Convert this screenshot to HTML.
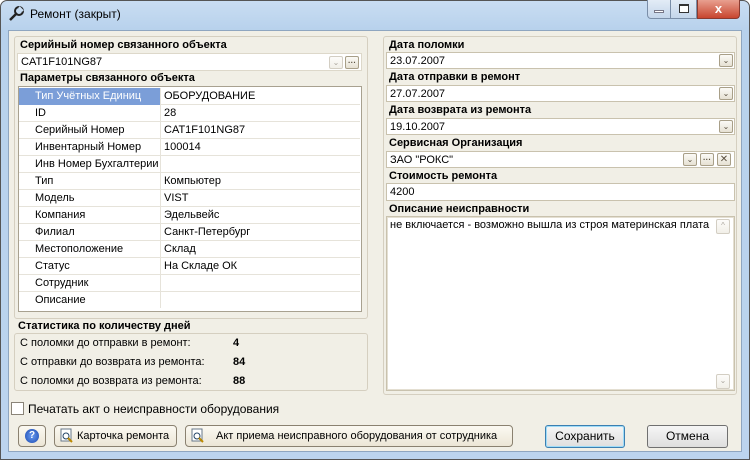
<!DOCTYPE html>
<html><head><meta charset="utf-8"><style>
*{box-sizing:border-box;margin:0;padding:0}
body{width:750px;height:460px;overflow:hidden;font-family:"Liberation Sans",sans-serif;font-size:11px;color:#000;background:#fff;position:relative}
.a{position:absolute}
.win{left:0;top:0;width:750px;height:460px;background:linear-gradient(#c9ddf2,#b7d1ec 30px,#bcd4ee);border:1px solid #555;border-radius:7px 7px 0 0}
.client{left:8px;top:30px;width:734px;height:422px;background:#f1efe6;border:1px solid #8fa6c0}
.panel{border:1px solid #d5cfc0;border-radius:3px;background:#f1efe6}
.lbl{font-weight:bold;font-size:11px;white-space:nowrap}
.inp{background:#fff;border:1px solid #c9c2ae;height:17px;padding:1px 3px;line-height:14px;white-space:nowrap}
.btn{width:14px;height:13px;border:1px solid #a89f88;border-radius:2px;background:linear-gradient(#fbfaf6,#e6e1d3);font-size:8px;text-align:center;line-height:11px;color:#5a5040}
.row{left:0;height:17px;width:341px;border-bottom:1px solid #e6e3da;line-height:16px}
.row .k{position:absolute;left:0;width:142px;height:16px;padding-left:16px;border-right:1px solid #e6e3da}
.row .v{position:absolute;left:143px;padding-left:2px}
.pb{height:22px;border:1px solid #8a8170;border-radius:4px;background:linear-gradient(#fbf9f2,#ece6d6);line-height:20px;font-size:11px;white-space:nowrap}
.db{height:23px;border:1px solid #707070;border-radius:3px;background:linear-gradient(#f6f6f6,#dedede);line-height:21px;text-align:center;font-size:12px}
</style></head><body>
<div class="a win"></div>
<svg class="a" style="left:7px;top:5px" width="18" height="18" viewBox="0 0 18 18"><path d="M3 15 L10 8" stroke="#222" stroke-width="2.5" fill="none"/><circle cx="12" cy="6" r="4" fill="none" stroke="#222" stroke-width="2"/><path d="M12 2 L16 6" stroke="#c9ddf2" stroke-width="2"/></svg>
<div class="a" style="left:30px;top:7px;font-size:12px">Ремонт (закрыт)</div>
<div class="a" style="left:647px;top:0;width:24px;height:19px;border:1px solid #7a8ea8;border-top:none;border-radius:0 0 0 4px;background:linear-gradient(#e3ecf6,#c3d5ea)"><div class="a" style="left:6px;top:10px;width:10px;height:3px;background:#fff;border:1px solid #778"></div></div>
<div class="a" style="left:670px;top:0;width:27px;height:19px;border:1px solid #7a8ea8;border-top:none;background:linear-gradient(#e3ecf6,#c3d5ea)"><div class="a" style="left:8px;top:4px;width:10px;height:9px;border:1px solid #333;border-top-width:2px;background:#fff"></div></div>
<div class="a" style="left:697px;top:0;width:43px;height:19px;border:1px solid #8a3a30;border-top:none;border-radius:0 0 4px 0;background:linear-gradient(#e8a090,#c8452f);color:#fff;font-weight:bold;text-align:center;line-height:17px;font-size:13px">x</div>
<div class="a client"></div>

<!-- left panel -->
<div class="a panel" style="left:14px;top:36px;width:354px;height:283px"></div>
<div class="a lbl" style="left:20px;top:39px">Серийный номер связанного объекта</div>
<div class="a inp" style="left:17px;top:53px;width:345px;height:18px;border-color:#ddd8ca">CAT1F101NG87</div>
<div class="a btn" style="left:329px;top:56px;opacity:.5">&#8964;</div>
<div class="a btn" style="left:345px;top:56px;font-weight:bold">···</div>
<div class="a lbl" style="left:20px;top:72px">Параметры связанного объекта</div>
<div class="a" style="left:18px;top:86px;width:344px;height:226px;border:1px solid #a8a190;background:#fff"></div>
<div class="a" style="left:19px;top:88px;width:342px;height:222px;background:#fff">
<div class="a row" style="top:0"><div class="k" style="background:#7b9ed8;color:#fff;height:17px">Тип Учётных Единиц</div><div class="v">ОБОРУДОВАНИЕ</div></div>
<div class="a row" style="top:17px"><div class="k">ID</div><div class="v">28</div></div>
<div class="a row" style="top:34px"><div class="k">Серийный Номер</div><div class="v">CAT1F101NG87</div></div>
<div class="a row" style="top:51px"><div class="k">Инвентарный Номер</div><div class="v">100014</div></div>
<div class="a row" style="top:68px"><div class="k">Инв Номер Бухгалтерии</div><div class="v"></div></div>
<div class="a row" style="top:85px"><div class="k">Тип</div><div class="v">Компьютер</div></div>
<div class="a row" style="top:102px"><div class="k">Модель</div><div class="v">VIST</div></div>
<div class="a row" style="top:119px"><div class="k">Компания</div><div class="v">Эдельвейс</div></div>
<div class="a row" style="top:136px"><div class="k">Филиал</div><div class="v">Санкт-Петербург</div></div>
<div class="a row" style="top:153px"><div class="k">Местоположение</div><div class="v">Склад</div></div>
<div class="a row" style="top:170px"><div class="k">Статус</div><div class="v">На Складе ОК</div></div>
<div class="a row" style="top:187px"><div class="k">Сотрудник</div><div class="v"></div></div>
<div class="a row" style="top:204px;border:none"><div class="k">Описание</div><div class="v"></div></div>
</div>
<div class="a lbl" style="left:18px;top:320px">Статистика по количеству дней</div>
<div class="a panel" style="left:14px;top:333px;width:354px;height:58px"></div>
<div class="a" style="left:20px;top:337px">С поломки до отправки в ремонт:</div>
<div class="a lbl" style="left:233px;top:337px">4</div>
<div class="a" style="left:20px;top:356px">С отправки до возврата из ремонта:</div>
<div class="a lbl" style="left:233px;top:356px">84</div>
<div class="a" style="left:20px;top:375px">С поломки до возврата из ремонта:</div>
<div class="a lbl" style="left:233px;top:375px">88</div>

<!-- right panel -->
<div class="a panel" style="left:383px;top:36px;width:354px;height:359px"></div>
<div class="a lbl" style="left:389px;top:39px">Дата поломки</div>
<div class="a inp" style="left:386px;top:52px;width:349px">23.07.2007</div>
<div class="a btn" style="left:719px;top:54px">&#8964;</div>
<div class="a lbl" style="left:389px;top:71px">Дата отправки в ремонт</div>
<div class="a inp" style="left:386px;top:85px;width:349px">27.07.2007</div>
<div class="a btn" style="left:719px;top:87px">&#8964;</div>
<div class="a lbl" style="left:389px;top:104px">Дата возврата из ремонта</div>
<div class="a inp" style="left:386px;top:118px;width:349px">19.10.2007</div>
<div class="a btn" style="left:719px;top:120px">&#8964;</div>
<div class="a lbl" style="left:389px;top:137px">Сервисная Организация</div>
<div class="a inp" style="left:386px;top:151px;width:349px">ЗАО "РОКС"</div>
<div class="a btn" style="left:683px;top:153px">&#8964;</div>
<div class="a btn" style="left:700px;top:153px;font-weight:bold">···</div>
<div class="a btn" style="left:717px;top:153px;font-size:10px">✕</div>
<div class="a lbl" style="left:389px;top:170px">Стоимость ремонта</div>
<div class="a inp" style="left:386px;top:183px;width:349px;height:18px">4200</div>
<div class="a lbl" style="left:389px;top:203px">Описание неисправности</div>
<div class="a" style="left:386px;top:216px;width:349px;height:175px;background:#fff;border:1px solid #c9c2ae;box-shadow:inset 0 0 0 1px #e4dfd2"></div>
<div class="a" style="left:390px;top:219px">не включается - возможно вышла из строя материнская плата</div>
<div class="a btn" style="left:716px;top:219px;height:15px;opacity:.5">^</div>
<div class="a btn" style="left:716px;top:374px;height:15px;opacity:.5">&#8964;</div>

<!-- bottom -->
<div class="a" style="left:11px;top:402px;width:13px;height:13px;border:1px solid #8a8478;background:#fff"></div>
<div class="a" style="left:28px;top:402px;font-size:12px">Печатать акт о неисправности оборудования</div>
<div class="a pb" style="left:18px;top:425px;width:28px"><div class="a" style="left:6px;top:3px;width:14px;height:14px;border-radius:50%;background:radial-gradient(#6a9cf0,#1a48b0);color:#fff;font-size:10px;font-weight:bold;text-align:center;line-height:14px">?</div></div>
<div class="a pb" style="left:54px;top:425px;width:123px;padding-left:22px">Карточка ремонта<svg class="a" style="left:4px;top:2px" width="16" height="16"><rect x="2" y="1" width="10" height="12" fill="#fff" stroke="#678"/><circle cx="7" cy="8" r="3" fill="none" stroke="#246"/><path d="M9 10 L13 14" stroke="#b80" stroke-width="2"/></svg></div>
<div class="a pb" style="left:185px;top:425px;width:328px;padding-left:30px">Акт приема неисправного оборудования от сотрудника<svg class="a" style="left:4px;top:2px" width="16" height="16"><rect x="2" y="1" width="10" height="12" fill="#fff" stroke="#678"/><circle cx="7" cy="8" r="3" fill="none" stroke="#246"/><path d="M9 10 L13 14" stroke="#b80" stroke-width="2"/></svg></div>
<div class="a db" style="left:545px;top:425px;width:80px;border-color:#3c7fb1;box-shadow:inset 0 0 0 1px #9fdcf8">Сохранить</div>
<div class="a db" style="left:647px;top:425px;width:81px">Отмена</div>
</body></html>
